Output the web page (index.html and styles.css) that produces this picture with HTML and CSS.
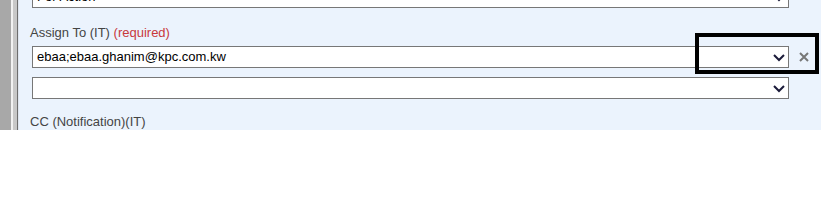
FILE: index.html
```html
<!DOCTYPE html>
<html>
<head>
<meta charset="utf-8">
<link rel="stylesheet" href="styles.css">
</head>
<body>
<div class="page">
  <div class="gutter">
    <div class="g1"></div><div class="g2"></div><div class="g3"></div><div class="g4"></div><div class="g5"></div>
  </div>
  <div class="panel">
    <div class="select first"><span class="val">For Action</span>
      <svg class="chev" width="12" height="8" viewBox="0 0 12 8"><polyline points="1,1 6,6 11,1" fill="none" stroke="#1b1b3a" stroke-width="2"/></svg>
    </div>
    <div class="label">Assign To (IT) <span class="req">(required)</span></div>
    <div class="row">
      <div class="select"><span class="val">ebaa;ebaa.ghanim@kpc.com.kw</span>
        <svg class="chev" width="12" height="8" viewBox="0 0 12 8"><polyline points="1,1 6,6 11,1" fill="none" stroke="#1b1b3a" stroke-width="2"/></svg>
      </div>
      <svg class="close" width="10" height="10" viewBox="0 0 10 10"><path d="M1,1 L9,9 M9,1 L1,9" stroke="#777" stroke-width="2"/></svg>
    </div>
    <div class="select second"><span class="val"></span>
      <svg class="chev" width="12" height="8" viewBox="0 0 12 8"><polyline points="1,1 6,6 11,1" fill="none" stroke="#1b1b3a" stroke-width="2"/></svg>
    </div>
    <div class="label cc">CC (Notification)(IT)</div>
  </div>
  <div class="highlight"></div>
</div>
</body>
</html>
```
FILE: styles.css
```css
html, body { margin: 0; padding: 0; background: #fff; }
body { font-family: "Liberation Sans", "DejaVu Sans", sans-serif; }
.page { position: relative; display: flex; height: 130px; overflow: hidden; width: 821px; }
.gutter { display: flex; height: 130px; }
.g1 { width: 11px; background: #a8a8a8; }
.g2 { width: 2px; background: #f2f2f2; }
.g3 { width: 4px; background: #c8c8c8; }
.g4 { width: 1px; background: #6e6e6e; }
.g5 { width: 1px; background: #dfe6ef; }
.panel { flex: 1; background: #ebf3fd; padding-left: 13px; box-sizing: border-box; }
.select { position: relative; width: 757px; height: 22px; box-sizing: border-box; border: 1px solid #777; background: #fff; display: flex; align-items: center; font-size: 13px; line-height: 16px; color: #000; }
.select .val { padding-left: 4px; }
.select .chev { position: absolute; right: 3px; top: 7px; }
.first { margin-top: -14px; }
.label { font-size: 13px; color: #444; margin-left: -2px; margin-top: 17px; height: 16px; line-height: 16px; }
.req { color: #c8393c; }
.row { display: flex; align-items: center; margin-top: 5px; }
.close { margin-left: 10px; }
.second { margin-top: 9px; }
.cc { margin-top: 15px; }
.highlight { position: absolute; left: 695px; top: 33px; width: 124px; height: 41px; box-sizing: border-box; border: 4px solid #000; }
```
